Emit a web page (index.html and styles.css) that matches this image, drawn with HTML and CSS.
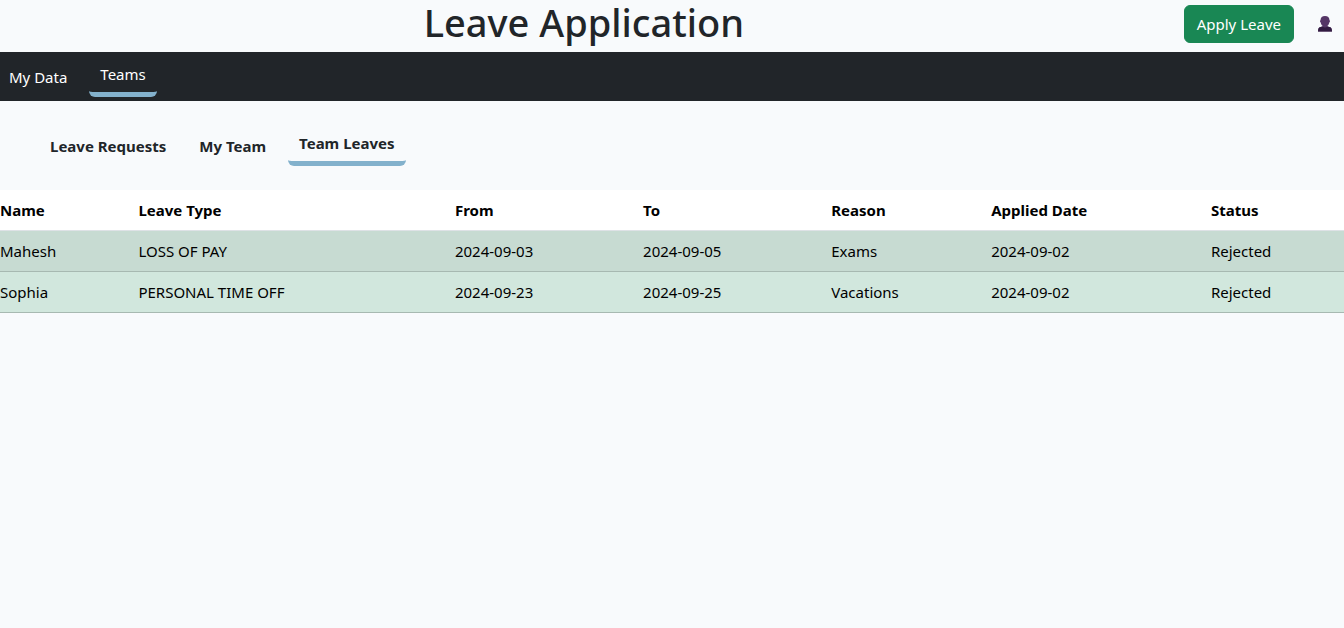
FILE: index.html
```html
<!DOCTYPE html>
<html lang="en">
<head>
<meta charset="utf-8">
<meta name="viewport" content="width=device-width, initial-scale=1">
<title>Leave Application</title>
<link rel="stylesheet" href="styles.css">
</head>
<body>
<header class="header">
  <h1 class="title">Leave Application</h1>
  <div class="actions">
    <button class="apply" type="button">Apply Leave</button>
    <button class="profile" type="button" aria-label="Profile">
      <svg width="14" height="16" viewBox="0 0 14 16" aria-hidden="true">
        <path fill="#553566" d="M7 0C4.200 0 2.500 1.500 2.500 4.200c-.6 0-.7 1.800.2 2.200C3 8 3.700 9 4.400 9.600V10.400L1.800 11.200C.6 11.600.2 13 0 15.400H14C13.800 13 13.400 11.600 12.200 11.200L9.600 10.400V9.600C10.300 9 11 8 11.300 6.400c.9-.4.8-2.200.2-2.200C11.500 1.500 9.800 0 7 0Z"/>
        <path fill="#321b41" d="M4.400 10.400 1.800 11.200C.6 11.600.2 13 0 15.400H14C13.800 13 13.400 11.600 12.200 11.200L9.600 10.400Q7 12.400 4.400 10.400Z"/>
      </svg>
    </button>
  </div>
</header>
<nav class="nav" aria-label="Main">
  <a class="tab" href="#my-data">My Data</a>
  <a class="tab active" href="#teams" aria-current="page">Teams</a>
</nav>
<nav class="subnav" aria-label="Teams">
  <a class="tab" href="#requests">Leave Requests</a>
  <a class="tab" href="#my-team">My Team</a>
  <a class="tab active" href="#team-leaves" aria-current="page">Team Leaves</a>
</nav>
<main>
  <table class="leaves">
    <colgroup>
      <col class="col-name"><col class="col-type"><col class="col-date"><col class="col-date"><col class="col-reason"><col class="col-applied"><col>
    </colgroup>
    <thead>
      <tr><th scope="col">Name</th><th scope="col">Leave Type</th><th scope="col">From</th><th scope="col">To</th><th scope="col">Reason</th><th scope="col">Applied Date</th><th scope="col">Status</th></tr>
    </thead>
    <tbody>
      <tr><td>Mahesh</td><td>LOSS OF PAY</td><td>2024-09-03</td><td>2024-09-05</td><td>Exams</td><td>2024-09-02</td><td>Rejected</td></tr>
      <tr><td>Sophia</td><td>PERSONAL TIME OFF</td><td>2024-09-23</td><td>2024-09-25</td><td>Vacations</td><td>2024-09-02</td><td>Rejected</td></tr>
    </tbody>
  </table>
</main>
</body>
</html>
```
FILE: styles.css
```css
* { box-sizing: border-box; }

body {
  margin: 0;
  background: #f8fafc;
  color: #212529;
  font-family: "Segoe UI", "Noto Sans", "Open Sans", sans-serif;
  font-size: 15px;
  line-height: 24px;
}

.header {
  display: flex;
  align-items: center;
  justify-content: space-between;
  padding: 0 12px 4px 0;
}

.title {
  flex: 1;
  margin: 0;
  padding: 0 16px 4px 0;
  font-size: 38px;
  font-weight: 500;
  line-height: 44px;
  text-align: center;
}

.actions {
  display: flex;
  align-items: center;
  gap: 24px;
}

.apply {
  padding: 6px 12px;
  border: 1px solid #198754;
  border-radius: 6px;
  background: #198754;
  color: #fff;
  font: inherit;
}

.profile {
  display: flex;
  padding: 0;
  border: 0;
  background: none;
}

.tab {
  padding: 0 11px;
  border-radius: 6px;
  color: inherit;
  text-decoration: none;
}

.active {
  padding: 5px 11px 6px;
  border-bottom: 5px solid #83b1cc;
}

.nav {
  display: flex;
  align-items: center;
  gap: 11px;
  padding: 5px 0 4px;
  background: #212529;
  color: #fff;
}

.nav .tab:first-child { padding-left: 9px; }

.subnav {
  display: flex;
  align-items: center;
  gap: 11px;
  padding: 25px 0 24px 39px;
  font-weight: 700;
}

.leaves {
  width: 100%;
  border-collapse: collapse;
  table-layout: fixed;
  color: #000;
  text-align: left;
}

.leaves th,
.leaves td {
  padding: 8px 0;
  border-bottom: 1px solid #a7b9b1;
}

.leaves th {
  border-color: #dee2e6;
  background: #fff;
}

.leaves tbody tr { background: #d1e7dd; }
.leaves tbody tr:nth-child(odd) { background: #c7dbd2; }

.col-name { width: 10.3%; }
.col-type { width: 23.55%; }
.col-date { width: 14%; }
.col-reason { width: 11.9%; }
.col-applied { width: 16.35%; }
```
